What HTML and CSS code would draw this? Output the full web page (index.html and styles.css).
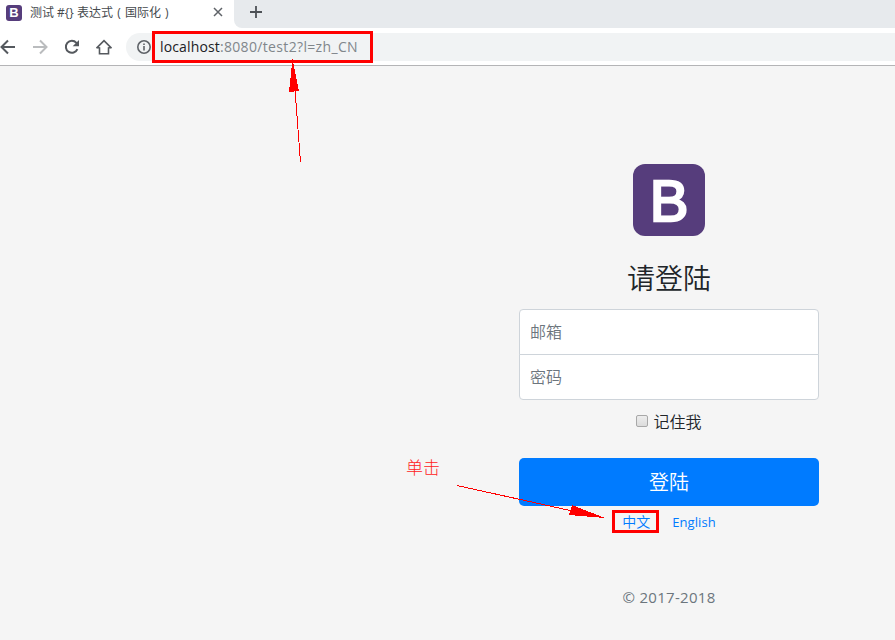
FILE: index.html
```
<!DOCTYPE html>
<html lang="zh-CN">
<head>
<meta charset="utf-8">
<title>测试 #{} 表达式（国际化）</title>
<link rel="stylesheet" href="styles.css">
</head>
<body>
<header class="browser">
  <div class="tabs">
    <div class="tab">
      <span class="favicon">B</span>
      <span class="tab-title">测试 #{} 表达式<span class="paren paren-open">(</span>国际化<span class="paren paren-close">)</span></span>
      <svg class="close" viewBox="0 0 10 10"><path d="M1 1l8 8M9 1l-8 8"/></svg>
    </div>
    <div class="strip"><svg class="plus" viewBox="0 0 12 12"><path d="M6 0v12M0 6h12"/></svg></div>
  </div>
  <div class="toolbar">
    <svg class="nav" viewBox="0 0 16 16"><path d="M15 8H2M8 1.5L1.5 8L8 14.5"/></svg>
    <svg class="nav nav-off" viewBox="0 0 16 16"><path d="M1 8h13M8 1.5L14.5 8L8 14.5"/></svg>
    <svg class="nav" viewBox="0 0 16 16"><path d="M13.4 10.2A6 6 0 1 1 12.4 3.9L14 5.6"/><path class="solid" d="M15 1v6.3H8.7z"/></svg>
    <svg class="nav nav-home" viewBox="0 0 16 16"><path d="M.5 9.200L8 1.600l7.500 7.600M3.500 8.200v6.500h9V8.200M.5 8.700h3M12.500 8.700h3"/></svg>
    <div class="address">
      <svg class="info" viewBox="0 0 14 14"><circle cx="7" cy="7" r="6.2"/><path d="M7 6v4.500M7 3.400v1.700"/></svg>
      <span class="url"><b>localhost</b>:8080/test2?l=zh_CN</span>
    </div>
  </div>
</header>
<main class="page">
  <form class="signin">
    <div class="logo">B</div>
    <h1>请登陆</h1>
    <input class="field field-top" type="text" placeholder="邮箱">
    <input class="field field-bottom" type="password" placeholder="密码">
    <label class="remember"><span class="checkbox"></span><span>记住我</span></label>
    <button class="submit" type="button">登陆</button>
    <nav class="langs"><a>中文</a><a class="english">English</a></nav>
    <p class="copyright">© 2017-2018</p>
  </form>
</main>
<div class="mark mark-url"></div>
<div class="mark mark-lang"></div>
<span class="note">单击</span>
<svg class="arrows" viewBox="0 0 895 640" shape-rendering="crispEdges">
  <path class="line" d="M300.500 162L295 90M457 485.500L570 510.500"/>
  <path class="head" d="M292.500 59L299 91L289 92zM605 518L572 505L569 515z"/>
</svg>
</body>
</html>
```
FILE: styles.css
```
* { box-sizing: border-box; }
body {
  margin: 0;
  width: 895px;
  height: 640px;
  overflow: hidden;
  position: relative;
  background: #f5f5f5;
  color: #212529;
  font-family: "Open Sans", "Noto Sans CJK SC", sans-serif;
}
.browser { height: 66px; background: #fff; border-bottom: 1px solid #b4b4b6; }
.tabs { display: flex; height: 28px; }
.tab { width: 234px; display: flex; align-items: center; padding: 0 11px 3px 6px; }
.favicon {
  width: 16px;
  height: 16px;
  border-radius: 3px;
  background: #563d7c;
  color: #fff;
  font: bold 13px/16px "Liberation Sans", sans-serif;
  text-align: center;
}
.tab-title { flex: 1; margin-left: 8px; font-size: 12px; line-height: 20px; color: #45494d; white-space: nowrap; }
.paren { display: inline-block; width: 12px; }
.paren-open { text-align: center; }
.paren-close { padding-left: 4px; }
.close { width: 10px; height: 10px; margin-top: -1px; fill: none; stroke: #5f6368; stroke-width: 1.5; }
.strip { flex: 1; background: #e7eaed; border-bottom-left-radius: 8px; padding: 6px 0 0 16px; }
.plus { display: block; width: 12px; height: 12px; fill: none; stroke: #4d5156; stroke-width: 1.8; }
.toolbar { display: flex; align-items: center; height: 37px; }
.nav { width: 16px; height: 16px; margin-right: 16px; fill: none; stroke: #55595e; stroke-width: 2; flex: none; }
.nav-off { stroke: #babcbe; }
.nav-home { stroke-width: 1.6; }
.nav .solid { fill: #55595e; stroke: none; }
.address {
  flex: 1;
  height: 28px;
  margin-left: -2px;
  padding-left: 11px;
  display: flex;
  align-items: center;
  background: #f1f3f4;
  border-radius: 14px 0 0 14px;
}
.info { width: 14px; height: 14px; fill: none; stroke: #5f6368; stroke-width: 1.6; }
.url { margin-left: 9px; font-size: 14px; line-height: 20px; letter-spacing: .34px; color: #80868b; white-space: nowrap; }
.url b { font-weight: 400; letter-spacing: .14px; color: #202124; }
.signin { width: 300px; margin: 98px 0 0 519px; display: flex; flex-direction: column; align-items: center; }
.logo {
  width: 72px;
  height: 72px;
  border-radius: 12px;
  background: #563d7c;
  color: #fff;
  font: 58px/74px "Liberation Sans", sans-serif;
  -webkit-text-stroke: 2.4px #fff;
  text-align: center;
}
h1 { margin: 25px 0 14px; font-size: 28px; line-height: 34px; font-weight: 350; }
.field {
  display: block;
  width: 300px;
  height: 46px;
  padding: 0 10px;
  border: 1px solid #ced4da;
  background: #fff;
  font: 350 16px/24px "Open Sans", "Noto Sans CJK SC", sans-serif;
}
.field::placeholder { color: #6c757d; opacity: 1; }
.field-top { border-radius: 4px 4px 0 0; }
.field-bottom { margin-top: -1px; border-radius: 0 0 4px 4px; }
.remember { display: flex; align-items: center; gap: 5px; height: 24px; margin: 10px 0 24px; font-size: 16px; font-weight: 350; line-height: 24px; }
.checkbox { width: 12px; height: 12px; margin-top: -2px; border: 1px solid #a8a8a8; border-radius: 2px; background: linear-gradient(#ededed, #dcdcdc); }
.submit { width: 300px; height: 48px; border: 0; border-radius: 5px; background: #007bff; color: #fff; padding: 2px 0 0; font: 350 20px/30px "Open Sans", "Noto Sans CJK SC", sans-serif; }
.langs { display: flex; gap: 22px; margin-top: 6px; color: #007bff; font-size: 14px; font-weight: 350; line-height: 20px; }
.english { font-size: 13px; font-weight: 400; letter-spacing: .1px; }
.copyright { margin: 53px 0 0; color: #6c757d; font-size: 15px; line-height: 24px; letter-spacing: .3px; }
.mark { position: absolute; border: 3px solid #f00; }
.mark-url { left: 152px; top: 31px; width: 221px; height: 32px; }
.mark-lang { left: 612px; top: 510px; width: 47px; height: 23px; }
.note { position: absolute; left: 406px; top: 455px; color: #f22; font: 300 17px/24px "Noto Sans CJK SC", serif; }
.arrows { position: absolute; left: 0; top: 0; width: 895px; height: 640px; pointer-events: none; }
.line { fill: none; stroke: #f00; stroke-width: 1; }
.head { fill: #f00; }
```
